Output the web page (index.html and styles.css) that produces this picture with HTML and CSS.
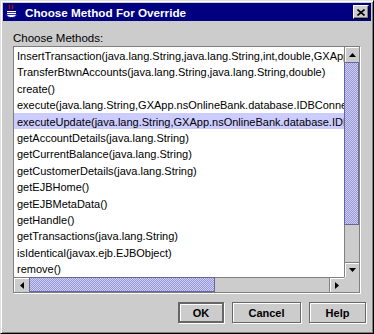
FILE: index.html
```html
<!DOCTYPE html>
<html lang="en">
<head>
<meta charset="UTF-8">
<title>Choose Method For Override</title>
<link rel="stylesheet" href="styles.css">
</head>
<body>

<div class="window">
  <div class="titlebar">
    <svg class="app-icon" width="16" height="16" viewBox="0 0 16 16">
      <path d="M6 1c-2 1 1 2-1 4M9 1c-2 1 1 2-1 4" fill="none" stroke="#d00000" stroke-width="1.3"/>
      <path d="M2.5 6.5h10v4a4 3 0 0 1-4 3h-2a4 3 0 0 1-4-3z" fill="#fff" stroke="#000080"/>
      <path d="M12.5 7.5h1.5v2.5h-1.5" fill="none" stroke="#000080"/>
      <path d="M3 8.5h9M3 10.5h9" stroke="#3030c0"/>
      <path d="M1 14.5h14" stroke="#000080" stroke-width="1.2"/>
    </svg>
    <span class="title">Choose Method For Override</span>
    <button class="close-btn" type="button">
      <svg width="8" height="7" viewBox="0 0 8 7">
        <path d="M0.5 0.5l7 6M7.5 0.5l-7 6" stroke="#000" stroke-width="1.6"/>
      </svg>
    </button>
  </div>

  <div class="content">
    <div class="caption">Choose Methods:</div>

    <div class="scrollpane">
      <ul class="method-list">
        <li>InsertTransaction(java.lang.String,java.lang.String,int,double,GXApp.nsOnlineBank.database.IDBConnection)</li>
        <li>TransferBtwnAccounts(java.lang.String,java.lang.String,double)</li>
        <li>create()</li>
        <li>execute(java.lang.String,GXApp.nsOnlineBank.database.IDBConnection)</li>
        <li class="selected">executeUpdate(java.lang.String,GXApp.nsOnlineBank.database.IDBConnection)</li>
        <li>getAccountDetails(java.lang.String)</li>
        <li>getCurrentBalance(java.lang.String)</li>
        <li>getCustomerDetails(java.lang.String)</li>
        <li>getEJBHome()</li>
        <li>getEJBMetaData()</li>
        <li>getHandle()</li>
        <li>getTransactions(java.lang.String)</li>
        <li>isIdentical(javax.ejb.EJBObject)</li>
        <li>remove()</li>
      </ul>

      <div class="vscroll">
        <div class="arrow-btn">
          <svg width="7" height="4" viewBox="0 0 7 4"><path d="M3.5 0L7 4H0z"/></svg>
        </div>
        <div class="thumb thumb-v"></div>
        <div class="track"></div>
        <div class="arrow-btn">
          <svg width="7" height="4" viewBox="0 0 7 4"><path d="M0 0h7L3.5 4z"/></svg>
        </div>
      </div>

      <div class="hscroll">
        <div class="arrow-btn">
          <svg width="4" height="7" viewBox="0 0 4 7"><path d="M0 3.5L4 0v7z"/></svg>
        </div>
        <div class="thumb thumb-h"></div>
        <div class="track"></div>
        <div class="arrow-btn">
          <svg width="4" height="7" viewBox="0 0 4 7"><path d="M0 0l4 3.5L0 7z"/></svg>
        </div>
      </div>

      <div class="corner"></div>
    </div>

    <div class="buttons">
      <button class="btn btn-default btn-ok" type="button">OK</button>
      <button class="btn btn-cancel" type="button">Cancel</button>
      <button class="btn btn-help" type="button">Help</button>
    </div>
  </div>
</div>

</body>
</html>
```

FILE: styles.css
```css
* {
  box-sizing: border-box;
}
body {
  margin: 0;
  padding: 0;
  background-color: #cccccc;
  font-family: "Liberation Sans", Arial, sans-serif;
}
.window {
  width: 374px;
  height: 334px;
  padding: 2px;
  background-color: #cccccc;
  border: 1px solid;
  border-color: #e0e0e0 #000 #000 #e0e0e0;
  box-shadow: inset 1px 1px 0 #fff, inset -1px -1px 0 #808080;
  display: flex;
  flex-direction: column;
}

/* title bar */
.titlebar {
  height: 18px;
  display: flex;
  align-items: center;
  padding: 0 2px 0 1px;
  background-color: #000080;
}
.app-icon {
  flex: none;
  margin-right: 5px;
}
.title {
  flex: 1;
  color: #fff;
  font-size: 11.7px;
  font-weight: bold;
  white-space: nowrap;
}
.close-btn {
  width: 16px;
  height: 14px;
  padding: 0;
  display: flex;
  align-items: center;
  justify-content: center;
  background-color: #cccccc;
  border: 1px solid;
  border-color: #fff #000 #000 #fff;
  box-shadow: inset -1px -1px 0 #808080;
}

/* dialog body */
.content {
  flex: 1;
  padding: 11px 5px 0 10px;
}
.caption {
  height: 13px;
  line-height: 13px;
  margin-bottom: 1px;
  font-size: 11.5px;
  color: #000;
}
.scrollpane {
  width: 347px;
  height: 247px;
  border: 1px solid #7f7f7f;
  box-shadow: 1px 1px 0 #fff;
  display: grid;
  grid-template-columns: 330px 15px;
  grid-template-rows: 230px 15px;
}
.method-list {
  list-style-type: none;
  margin: 0;
  padding: 0;
  overflow: hidden;
  background-color: #fff;
}
.method-list li {
  height: 16.4px;
  line-height: 14px;
  padding: 2px 0 0 3px;
  font-size: 11px;
  color: #000;
  white-space: nowrap;
}
.method-list li.selected {
  background-color: #ccccff;
}

/* scrollbars */
.vscroll {
  display: flex;
  flex-direction: column;
}
.hscroll {
  display: flex;
}
.arrow-btn {
  flex: none;
  width: 15px;
  height: 15px;
  display: flex;
  align-items: center;
  justify-content: center;
  background-color: #cccccc;
  border-left: 1px solid #808080;
  border-top: 1px solid #808080;
  box-shadow: inset 1px 1px 0 #fff;
}
.vscroll .arrow-btn:first-child {
  border-top: none;
}
.hscroll .arrow-btn:first-child {
  border-left: none;
}
.thumb {
  flex: none;
  border: 1px solid #666699;
  background: repeating-conic-gradient(#9999cc 0 25%, #ccccff 0 50%) 0 0 / 2px 2px;
}
.thumb-v {
  height: 163px;
}
.thumb-h {
  width: 186px;
}
.track {
  flex: 1;
  background-color: #cccccc;
}
.vscroll .track {
  border-left: 1px solid #808080;
}
.hscroll .track {
  border-top: 1px solid #808080;
}
.corner {
  background-color: #cccccc;
}

/* buttons */
.buttons {
  display: flex;
  justify-content: flex-end;
  gap: 8px;
  margin-top: 9px;
}
.btn {
  height: 21px;
  padding: 0;
  font-family: "Liberation Sans", Arial, sans-serif;
  font-size: 11px;
  font-weight: bold;
  color: #000;
  background-color: #cccccc;
  border: 1px solid #666;
  box-shadow: inset 1px 1px 0 #fff, 1px 1px 0 #fff;
}
.btn-default {
  border-width: 2px;
}
.btn-ok {
  width: 46px;
}
.btn-cancel {
  width: 69px;
}
.btn-help {
  width: 57px;
}
```
